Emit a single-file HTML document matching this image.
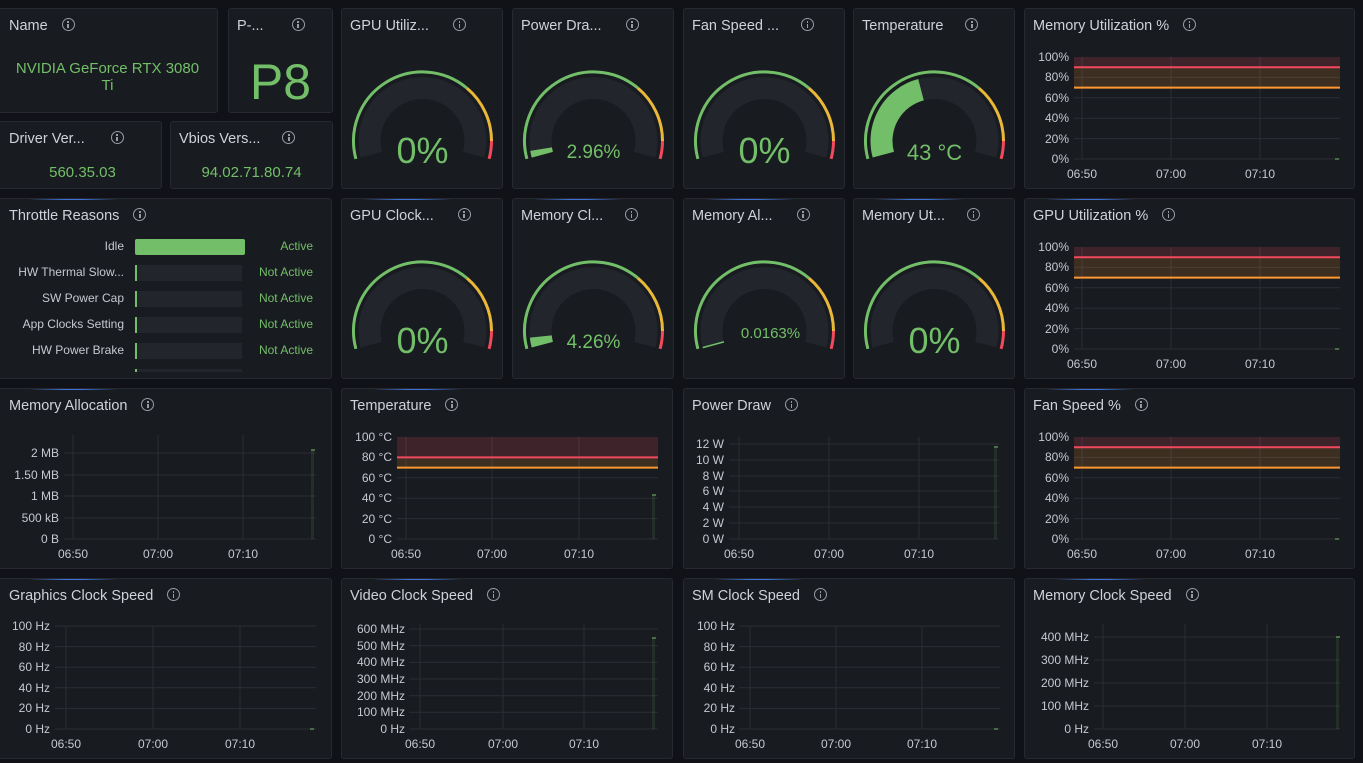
<!DOCTYPE html>
<html><head><meta charset="utf-8"><style>
body{margin:0;width:1363px;height:763px;background:#111217;overflow:hidden;font-family:"Liberation Sans",sans-serif;position:relative}
.p{position:absolute;background:#181b1f;border:1px solid #26292f;border-radius:3px;box-sizing:border-box;overflow:hidden}
.t{position:absolute;left:8px;top:9px;color:#d0d1dc;font-size:14.5px;white-space:nowrap}
.i{display:inline-block;width:11px;height:11px;border:1.4px solid #9a9ba6;border-radius:50%;vertical-align:-1px;margin-left:14px;position:relative}
.i:before{content:"";position:absolute;left:4.6px;top:2px;width:1.6px;height:1.6px;background:#9a9ba6}
.i:after{content:"";position:absolute;left:4.6px;top:4.6px;width:1.6px;height:4px;background:#9a9ba6}
.g{color:#73bf69;position:absolute;text-align:center;width:100%}
.bl{position:absolute;top:-1px;left:20px;width:90px;height:2px;background:linear-gradient(90deg,transparent,#3d71d9 40%,#3d71d9 60%,transparent)}
svg{position:absolute;left:0;top:0}
svg text{font-family:"Liberation Sans",sans-serif}
.ax{fill:#c7c8d2;font-size:12px}
.row{position:absolute;left:0;width:330px;height:16px;font-size:12px;color:#c7c8d2}
</style></head><body>

<div class="p" style="left:-3px;top:8px;width:221px;height:105px"><div class="t" style="left:11px">Name<span class="i"></span></div>
<div class="g" style="top:51px;font-size:15px;line-height:17px;left:0">NVIDIA GeForce RTX 3080<br>Ti</div></div>
<div class="p" style="left:228px;top:8px;width:105px;height:105px"><div class="t">P-...<span class="i" style="margin-left:28px"></span></div>
<div class="g" style="top:44px;font-size:50px;left:0">P8</div></div>
<div class="p" style="left:-3px;top:121px;width:165px;height:68px"><div class="t" style="left:11px">Driver Ver...<span class="i" style="margin-left:26px"></span></div>
<div class="g" style="top:42px;font-size:15px;left:3px">560.35.03</div></div>
<div class="p" style="left:170px;top:121px;width:163px;height:68px"><div class="t">Vbios Vers...<span class="i" style="margin-left:22px"></span></div>
<div class="g" style="top:42px;font-size:15px">94.02.71.80.74</div></div>

<div class="p" style="left:341px;top:8px;width:162px;height:181px"><div class="t">GPU Utiliz...<span class="i" style="margin-left:24px"></span></div>
<svg width="162" height="181"><g transform="translate(80.5,132)">
<path d="M-66.6,17.9 A69,69 0 0 1 44.4,-52.9" stroke="#73bf69" stroke-width="3" fill="none"/>
<path d="M44.4,-52.9 A69,69 0 0 1 69,0" stroke="#eab839" stroke-width="3" fill="none"/>
<path d="M69,0 A69,69 0 0 1 66.6,17.9" stroke="#f2495c" stroke-width="3" fill="none"/>
<path d="M-51.2,13.7 A53,53 0 1 1 51.2,13.7" stroke="#22252b" stroke-width="22" fill="none"/>
<text y="22" text-anchor="middle" fill="#73bf69" font-size="36">0%</text></g></svg></div>

<div class="p" style="left:512px;top:8px;width:162px;height:181px"><div class="t">Power Dra...<span class="i" style="margin-left:24px"></span></div>
<svg width="162" height="181"><g transform="translate(80.5,132)">
<path d="M-66.6,17.9 A69,69 0 0 1 44.4,-52.9" stroke="#73bf69" stroke-width="3" fill="none"/>
<path d="M44.4,-52.9 A69,69 0 0 1 69,0" stroke="#eab839" stroke-width="3" fill="none"/>
<path d="M69,0 A69,69 0 0 1 66.6,17.9" stroke="#f2495c" stroke-width="3" fill="none"/>
<path d="M-51.2,13.7 A53,53 0 1 1 51.2,13.7" stroke="#22252b" stroke-width="22" fill="none"/>
<path d="M-51.2,13.7 A53,53 0 0 1 -52.4,8.1" stroke="#73bf69" stroke-width="22" fill="none"/>
<text y="17" text-anchor="middle" fill="#73bf69" font-size="19">2.96%</text></g></svg></div>

<div class="p" style="left:683px;top:8px;width:162px;height:181px"><div class="t">Fan Speed ...<span class="i" style="margin-left:22px"></span></div>
<svg width="162" height="181"><g transform="translate(80.5,132)">
<path d="M-66.6,17.9 A69,69 0 0 1 44.4,-52.9" stroke="#73bf69" stroke-width="3" fill="none"/>
<path d="M44.4,-52.9 A69,69 0 0 1 69,0" stroke="#eab839" stroke-width="3" fill="none"/>
<path d="M69,0 A69,69 0 0 1 66.6,17.9" stroke="#f2495c" stroke-width="3" fill="none"/>
<path d="M-51.2,13.7 A53,53 0 1 1 51.2,13.7" stroke="#22252b" stroke-width="22" fill="none"/>
<text y="22" text-anchor="middle" fill="#73bf69" font-size="36">0%</text></g></svg></div>

<div class="p" style="left:853px;top:8px;width:162px;height:181px"><div class="t">Temperature<span class="i" style="margin-left:22px"></span></div>
<svg width="162" height="181"><g transform="translate(80.5,132)">
<path d="M-66.6,17.9 A69,69 0 0 1 44.4,-52.9" stroke="#73bf69" stroke-width="3" fill="none"/>
<path d="M44.4,-52.9 A69,69 0 0 1 69,0" stroke="#eab839" stroke-width="3" fill="none"/>
<path d="M69,0 A69,69 0 0 1 66.6,17.9" stroke="#f2495c" stroke-width="3" fill="none"/>
<path d="M-51.2,13.7 A53,53 0 1 1 51.2,13.7" stroke="#22252b" stroke-width="22" fill="none"/>
<path d="M-51.2,13.7 A53,53 0 0 1 -13.5,-51.3" stroke="#73bf69" stroke-width="22" fill="none"/>
<text y="19" text-anchor="middle" fill="#73bf69" font-size="22">43 °C</text></g></svg></div>

<div class="p" style="left:341px;top:198px;width:162px;height:181px"><div class="bl"></div><div class="t">GPU Clock...<span class="i" style="margin-left:24px"></span></div>
<svg width="162" height="181"><g transform="translate(80.5,132)">
<path d="M-66.6,17.9 A69,69 0 0 1 44.4,-52.9" stroke="#73bf69" stroke-width="3" fill="none"/>
<path d="M44.4,-52.9 A69,69 0 0 1 69,0" stroke="#eab839" stroke-width="3" fill="none"/>
<path d="M69,0 A69,69 0 0 1 66.6,17.9" stroke="#f2495c" stroke-width="3" fill="none"/>
<path d="M-51.2,13.7 A53,53 0 1 1 51.2,13.7" stroke="#22252b" stroke-width="22" fill="none"/>
<text y="22" text-anchor="middle" fill="#73bf69" font-size="36">0%</text></g></svg></div>

<div class="p" style="left:512px;top:198px;width:162px;height:181px"><div class="bl"></div><div class="t">Memory Cl...<span class="i" style="margin-left:22px"></span></div>
<svg width="162" height="181"><g transform="translate(80.5,132)">
<path d="M-66.6,17.9 A69,69 0 0 1 44.4,-52.9" stroke="#73bf69" stroke-width="3" fill="none"/>
<path d="M44.4,-52.9 A69,69 0 0 1 69,0" stroke="#eab839" stroke-width="3" fill="none"/>
<path d="M69,0 A69,69 0 0 1 66.6,17.9" stroke="#f2495c" stroke-width="3" fill="none"/>
<path d="M-51.2,13.7 A53,53 0 1 1 51.2,13.7" stroke="#22252b" stroke-width="22" fill="none"/>
<path d="M-51.2,13.7 A53,53 0 0 1 -52.7,5.5" stroke="#73bf69" stroke-width="22" fill="none"/>
<text y="17" text-anchor="middle" fill="#73bf69" font-size="19">4.26%</text></g></svg></div>

<div class="p" style="left:683px;top:198px;width:162px;height:181px"><div class="bl"></div><div class="t">Memory Al...<span class="i" style="margin-left:24px"></span></div>
<svg width="162" height="181"><g transform="translate(80.5,132)">
<path d="M-66.6,17.9 A69,69 0 0 1 44.4,-52.9" stroke="#73bf69" stroke-width="3" fill="none"/>
<path d="M44.4,-52.9 A69,69 0 0 1 69,0" stroke="#eab839" stroke-width="3" fill="none"/>
<path d="M69,0 A69,69 0 0 1 66.6,17.9" stroke="#f2495c" stroke-width="3" fill="none"/>
<path d="M-51.2,13.7 A53,53 0 1 1 51.2,13.7" stroke="#22252b" stroke-width="22" fill="none"/>
<path d="M-61.8,16.6 L-40.6,10.9" stroke="#73bf69" stroke-width="1.5"/>
<text x="6" y="7" text-anchor="middle" fill="#73bf69" font-size="15">0.0163%</text></g></svg></div>

<div class="p" style="left:853px;top:198px;width:162px;height:181px"><div class="bl"></div><div class="t">Memory Ut...<span class="i" style="margin-left:22px"></span></div>
<svg width="162" height="181"><g transform="translate(80.5,132)">
<path d="M-66.6,17.9 A69,69 0 0 1 44.4,-52.9" stroke="#73bf69" stroke-width="3" fill="none"/>
<path d="M44.4,-52.9 A69,69 0 0 1 69,0" stroke="#eab839" stroke-width="3" fill="none"/>
<path d="M69,0 A69,69 0 0 1 66.6,17.9" stroke="#f2495c" stroke-width="3" fill="none"/>
<path d="M-51.2,13.7 A53,53 0 1 1 51.2,13.7" stroke="#22252b" stroke-width="22" fill="none"/>
<text y="22" text-anchor="middle" fill="#73bf69" font-size="36">0%</text></g></svg></div>

<div class="p" style="left:-3px;top:198px;width:335px;height:181px"><div class="bl" style="left:30px"></div><div class="t" style="left:11px">Throttle Reasons<span class="i"></span></div>
<div style="position:absolute;left:3px;top:0;width:330px;height:181px">
<div class="row" style="top:40px"><span style="position:absolute;right:207px">Idle</span><span style="position:absolute;left:134px;width:110px;height:16px;background:#73bf69;border-radius:2px"></span><span style="position:absolute;right:18px;color:#73bf69">Active</span></div>
<div class="row" style="top:66px"><span style="position:absolute;right:207px">HW Thermal Slow...</span><span style="position:absolute;left:134px;width:105px;height:16px;background:#22252b;border-left:2px solid #73bf69"></span><span style="position:absolute;right:18px;color:#73bf69">Not Active</span></div>
<div class="row" style="top:92px"><span style="position:absolute;right:207px">SW Power Cap</span><span style="position:absolute;left:134px;width:105px;height:16px;background:#22252b;border-left:2px solid #73bf69"></span><span style="position:absolute;right:18px;color:#73bf69">Not Active</span></div>
<div class="row" style="top:118px"><span style="position:absolute;right:207px">App Clocks Setting</span><span style="position:absolute;left:134px;width:105px;height:16px;background:#22252b;border-left:2px solid #73bf69"></span><span style="position:absolute;right:18px;color:#73bf69">Not Active</span></div>
<div class="row" style="top:144px"><span style="position:absolute;right:207px">HW Power Brake</span><span style="position:absolute;left:134px;width:105px;height:16px;background:#22252b;border-left:2px solid #73bf69"></span><span style="position:absolute;right:18px;color:#73bf69">Not Active</span></div>
<div class="row" style="top:170px"><span style="position:absolute;left:134px;width:105px;height:3px;background:#22252b;border-left:2px solid #73bf69"></span></div>
</div></div>

<div class="p" style="left:1024px;top:8px;width:331px;height:181px"><div class="t">Memory Utilization %<span class="i"></span></div>
<svg width="331" height="181"><g stroke="#2b2e35" stroke-width="1">
<line x1="49" x2="315" y1="68.4" y2="68.4"/><line x1="49" x2="315" y1="88.8" y2="88.8"/><line x1="49" x2="315" y1="109.2" y2="109.2"/><line x1="49" x2="315" y1="129.6" y2="129.6"/><line x1="49" x2="315" y1="150" y2="150"/>
<line x1="57" x2="57" y1="48" y2="150"/><line x1="146" x2="146" y1="48" y2="150"/><line x1="235" x2="235" y1="48" y2="150"/></g>
<rect x="49" y="48" width="266" height="10.2" fill="#f2495c" opacity=".18"/><rect x="49" y="58.2" width="266" height="20.4" fill="#ff9830" opacity=".16"/>
<line x1="49" x2="315" y1="58.2" y2="58.2" stroke="#f2495c" stroke-width="2"/><line x1="49" x2="315" y1="78.6" y2="78.6" stroke="#ff9830" stroke-width="2"/>
<line x1="310" x2="314" y1="150" y2="150" stroke="#73bf69"/>
<g class="ax" text-anchor="end"><text x="44" y="52">100%</text><text x="44" y="72">80%</text><text x="44" y="93">60%</text><text x="44" y="113">40%</text><text x="44" y="134">20%</text><text x="44" y="154">0%</text></g>
<g class="ax" text-anchor="middle"><text x="57" y="169">06:50</text><text x="146" y="169">07:00</text><text x="235" y="169">07:10</text></g></svg></div>

<div class="p" style="left:1024px;top:198px;width:331px;height:181px"><div class="bl"></div><div class="t">GPU Utilization %<span class="i"></span></div>
<svg width="331" height="181"><g stroke="#2b2e35" stroke-width="1">
<line x1="49" x2="315" y1="68.4" y2="68.4"/><line x1="49" x2="315" y1="88.8" y2="88.8"/><line x1="49" x2="315" y1="109.2" y2="109.2"/><line x1="49" x2="315" y1="129.6" y2="129.6"/><line x1="49" x2="315" y1="150" y2="150"/>
<line x1="57" x2="57" y1="48" y2="150"/><line x1="146" x2="146" y1="48" y2="150"/><line x1="235" x2="235" y1="48" y2="150"/></g>
<rect x="49" y="48" width="266" height="10.2" fill="#f2495c" opacity=".18"/><rect x="49" y="58.2" width="266" height="20.4" fill="#ff9830" opacity=".16"/>
<line x1="49" x2="315" y1="58.2" y2="58.2" stroke="#f2495c" stroke-width="2"/><line x1="49" x2="315" y1="78.6" y2="78.6" stroke="#ff9830" stroke-width="2"/>
<line x1="310" x2="314" y1="150" y2="150" stroke="#73bf69"/>
<g class="ax" text-anchor="end"><text x="44" y="52">100%</text><text x="44" y="72">80%</text><text x="44" y="93">60%</text><text x="44" y="113">40%</text><text x="44" y="134">20%</text><text x="44" y="154">0%</text></g>
<g class="ax" text-anchor="middle"><text x="57" y="169">06:50</text><text x="146" y="169">07:00</text><text x="235" y="169">07:10</text></g></svg></div>

<div class="p" style="left:1024px;top:388px;width:331px;height:181px"><div class="bl"></div><div class="t">Fan Speed %<span class="i"></span></div>
<svg width="331" height="181"><g stroke="#2b2e35" stroke-width="1">
<line x1="49" x2="315" y1="68.4" y2="68.4"/><line x1="49" x2="315" y1="88.8" y2="88.8"/><line x1="49" x2="315" y1="109.2" y2="109.2"/><line x1="49" x2="315" y1="129.6" y2="129.6"/><line x1="49" x2="315" y1="150" y2="150"/>
<line x1="57" x2="57" y1="48" y2="150"/><line x1="146" x2="146" y1="48" y2="150"/><line x1="235" x2="235" y1="48" y2="150"/></g>
<rect x="49" y="48" width="266" height="10.2" fill="#f2495c" opacity=".18"/><rect x="49" y="58.2" width="266" height="20.4" fill="#ff9830" opacity=".16"/>
<line x1="49" x2="315" y1="58.2" y2="58.2" stroke="#f2495c" stroke-width="2"/><line x1="49" x2="315" y1="78.6" y2="78.6" stroke="#ff9830" stroke-width="2"/>
<line x1="310" x2="314" y1="150" y2="150" stroke="#73bf69"/>
<g class="ax" text-anchor="end"><text x="44" y="52">100%</text><text x="44" y="72">80%</text><text x="44" y="93">60%</text><text x="44" y="113">40%</text><text x="44" y="134">20%</text><text x="44" y="154">0%</text></g>
<g class="ax" text-anchor="middle"><text x="57" y="169">06:50</text><text x="146" y="169">07:00</text><text x="235" y="169">07:10</text></g></svg></div>

<div class="p" style="left:-3px;top:388px;width:335px;height:181px"><div class="bl" style="left:30px"></div><div class="t" style="left:11px">Memory Allocation<span class="i"></span></div>
<svg width="335" height="181"><g stroke="#2b2e35">
<line x1="66" x2="318" y1="64" y2="64"/><line x1="66" x2="318" y1="86" y2="86"/><line x1="66" x2="318" y1="107" y2="107"/><line x1="66" x2="318" y1="129" y2="129"/><line x1="66" x2="318" y1="150" y2="150"/>
<line x1="75" x2="75" y1="46" y2="150"/><line x1="160" x2="160" y1="46" y2="150"/><line x1="245" x2="245" y1="46" y2="150"/></g>
<rect x="313" y="61" width="3" height="89" fill="#73bf69" opacity=".12"/><line x1="313" x2="317" y1="61" y2="61" stroke="#73bf69"/>
<g class="ax" text-anchor="end"><text x="61" y="68">2 MB</text><text x="61" y="90">1.50 MB</text><text x="61" y="111">1 MB</text><text x="61" y="133">500 kB</text><text x="61" y="154">0 B</text></g>
<g class="ax" text-anchor="middle"><text x="75" y="169">06:50</text><text x="160" y="169">07:00</text><text x="245" y="169">07:10</text></g></svg></div>

<div class="p" style="left:341px;top:388px;width:332px;height:181px"><div class="bl" style="left:30px"></div><div class="t">Temperature<span class="i"></span></div>
<svg width="332" height="181"><g stroke="#2b2e35">
<line x1="55" x2="316" y1="68.4" y2="68.4"/><line x1="55" x2="316" y1="88.8" y2="88.8"/><line x1="55" x2="316" y1="109.2" y2="109.2"/><line x1="55" x2="316" y1="129.6" y2="129.6"/><line x1="55" x2="316" y1="150" y2="150"/>
<line x1="64" x2="64" y1="48" y2="150"/><line x1="150" x2="150" y1="48" y2="150"/><line x1="237" x2="237" y1="48" y2="150"/></g>
<rect x="55" y="48" width="261" height="20.4" fill="#f2495c" opacity=".18"/><rect x="55" y="68.4" width="261" height="10.2" fill="#ff9830" opacity=".16"/>
<line x1="55" x2="316" y1="68.4" y2="68.4" stroke="#f2495c" stroke-width="2"/><line x1="55" x2="316" y1="78.6" y2="78.6" stroke="#ff9830" stroke-width="2"/>
<rect x="310" y="106" width="3" height="44" fill="#73bf69" opacity=".12"/><line x1="310" x2="314" y1="106" y2="106" stroke="#73bf69"/>
<g class="ax" text-anchor="end"><text x="50" y="52">100 °C</text><text x="50" y="72">80 °C</text><text x="50" y="93">60 °C</text><text x="50" y="113">40 °C</text><text x="50" y="134">20 °C</text><text x="50" y="154">0 °C</text></g>
<g class="ax" text-anchor="middle"><text x="64" y="169">06:50</text><text x="150" y="169">07:00</text><text x="237" y="169">07:10</text></g></svg></div>

<div class="p" style="left:683px;top:388px;width:332px;height:181px"><div class="t">Power Draw<span class="i"></span></div>
<svg width="332" height="181"><g stroke="#2b2e35">
<line x1="45" x2="315" y1="55" y2="55"/><line x1="45" x2="315" y1="71" y2="71"/><line x1="45" x2="315" y1="87" y2="87"/><line x1="45" x2="315" y1="102" y2="102"/><line x1="45" x2="315" y1="118" y2="118"/><line x1="45" x2="315" y1="134" y2="134"/><line x1="45" x2="315" y1="150" y2="150"/>
<line x1="55" x2="55" y1="48" y2="150"/><line x1="145" x2="145" y1="48" y2="150"/><line x1="235" x2="235" y1="48" y2="150"/></g>
<rect x="310" y="58" width="3" height="92" fill="#73bf69" opacity=".12"/><line x1="310" x2="314" y1="58" y2="58" stroke="#73bf69"/>
<g class="ax" text-anchor="end"><text x="40" y="59">12 W</text><text x="40" y="75">10 W</text><text x="40" y="91">8 W</text><text x="40" y="106">6 W</text><text x="40" y="122">4 W</text><text x="40" y="138">2 W</text><text x="40" y="154">0 W</text></g>
<g class="ax" text-anchor="middle"><text x="55" y="169">06:50</text><text x="145" y="169">07:00</text><text x="235" y="169">07:10</text></g></svg></div>

<div class="p" style="left:-3px;top:578px;width:335px;height:181px"><div class="bl" style="left:30px"></div><div class="t" style="left:11px">Graphics Clock Speed<span class="i"></span></div>
<svg width="335" height="181"><g stroke="#2b2e35">
<line x1="57" x2="318" y1="47" y2="47"/><line x1="57" x2="318" y1="67.6" y2="67.6"/><line x1="57" x2="318" y1="88.2" y2="88.2"/><line x1="57" x2="318" y1="108.8" y2="108.8"/><line x1="57" x2="318" y1="129.4" y2="129.4"/><line x1="57" x2="318" y1="150" y2="150"/>
<line x1="68" x2="68" y1="47" y2="150"/><line x1="155" x2="155" y1="47" y2="150"/><line x1="242" x2="242" y1="47" y2="150"/></g>
<line x1="312" x2="316" y1="150" y2="150" stroke="#73bf69"/>
<g class="ax" text-anchor="end"><text x="52" y="51">100 Hz</text><text x="52" y="72">80 Hz</text><text x="52" y="92">60 Hz</text><text x="52" y="113">40 Hz</text><text x="52" y="133">20 Hz</text><text x="52" y="154">0 Hz</text></g>
<g class="ax" text-anchor="middle"><text x="68" y="169">06:50</text><text x="155" y="169">07:00</text><text x="242" y="169">07:10</text></g></svg></div>

<div class="p" style="left:341px;top:578px;width:332px;height:181px"><div class="bl" style="left:30px"></div><div class="t">Video Clock Speed<span class="i"></span></div>
<svg width="332" height="181"><g stroke="#2b2e35">
<line x1="67" x2="316" y1="50" y2="50"/><line x1="67" x2="316" y1="66.7" y2="66.7"/><line x1="67" x2="316" y1="83.3" y2="83.3"/><line x1="67" x2="316" y1="100" y2="100"/><line x1="67" x2="316" y1="116.7" y2="116.7"/><line x1="67" x2="316" y1="133.3" y2="133.3"/><line x1="67" x2="316" y1="150" y2="150"/>
<line x1="78" x2="78" y1="45" y2="150"/><line x1="161" x2="161" y1="45" y2="150"/><line x1="242" x2="242" y1="45" y2="150"/></g>
<rect x="310" y="59" width="3" height="91" fill="#73bf69" opacity=".12"/><line x1="310" x2="314" y1="59" y2="59" stroke="#73bf69"/>
<g class="ax" text-anchor="end"><text x="63" y="54">600 MHz</text><text x="63" y="71">500 MHz</text><text x="63" y="87">400 MHz</text><text x="63" y="104">300 MHz</text><text x="63" y="121">200 MHz</text><text x="63" y="137">100 MHz</text><text x="63" y="154">0 Hz</text></g>
<g class="ax" text-anchor="middle"><text x="78" y="169">06:50</text><text x="161" y="169">07:00</text><text x="242" y="169">07:10</text></g></svg></div>

<div class="p" style="left:683px;top:578px;width:332px;height:181px"><div class="bl" style="left:30px"></div><div class="t">SM Clock Speed<span class="i"></span></div>
<svg width="332" height="181"><g stroke="#2b2e35">
<line x1="55" x2="316" y1="47" y2="47"/><line x1="55" x2="316" y1="67.6" y2="67.6"/><line x1="55" x2="316" y1="88.2" y2="88.2"/><line x1="55" x2="316" y1="108.8" y2="108.8"/><line x1="55" x2="316" y1="129.4" y2="129.4"/><line x1="55" x2="316" y1="150" y2="150"/>
<line x1="66" x2="66" y1="47" y2="150"/><line x1="152" x2="152" y1="47" y2="150"/><line x1="238" x2="238" y1="47" y2="150"/></g>
<line x1="310" x2="314" y1="150" y2="150" stroke="#73bf69"/>
<g class="ax" text-anchor="end"><text x="51" y="51">100 Hz</text><text x="51" y="72">80 Hz</text><text x="51" y="92">60 Hz</text><text x="51" y="113">40 Hz</text><text x="51" y="133">20 Hz</text><text x="51" y="154">0 Hz</text></g>
<g class="ax" text-anchor="middle"><text x="66" y="169">06:50</text><text x="152" y="169">07:00</text><text x="238" y="169">07:10</text></g></svg></div>

<div class="p" style="left:1024px;top:578px;width:331px;height:181px"><div class="bl" style="left:30px"></div><div class="t">Memory Clock Speed<span class="i"></span></div>
<svg width="331" height="181"><g stroke="#2b2e35">
<line x1="69" x2="315" y1="58" y2="58"/><line x1="69" x2="315" y1="81" y2="81"/><line x1="69" x2="315" y1="104" y2="104"/><line x1="69" x2="315" y1="127" y2="127"/><line x1="69" x2="315" y1="150" y2="150"/>
<line x1="78" x2="78" y1="45" y2="150"/><line x1="160" x2="160" y1="45" y2="150"/><line x1="242" x2="242" y1="45" y2="150"/></g>
<rect x="311" y="58" width="3" height="92" fill="#73bf69" opacity=".12"/><line x1="311" x2="315" y1="58" y2="58" stroke="#73bf69"/>
<g class="ax" text-anchor="end"><text x="64" y="62">400 MHz</text><text x="64" y="85">300 MHz</text><text x="64" y="108">200 MHz</text><text x="64" y="131">100 MHz</text><text x="64" y="154">0 Hz</text></g>
<g class="ax" text-anchor="middle"><text x="78" y="169">06:50</text><text x="160" y="169">07:00</text><text x="242" y="169">07:10</text></g></svg></div>

</body></html>
